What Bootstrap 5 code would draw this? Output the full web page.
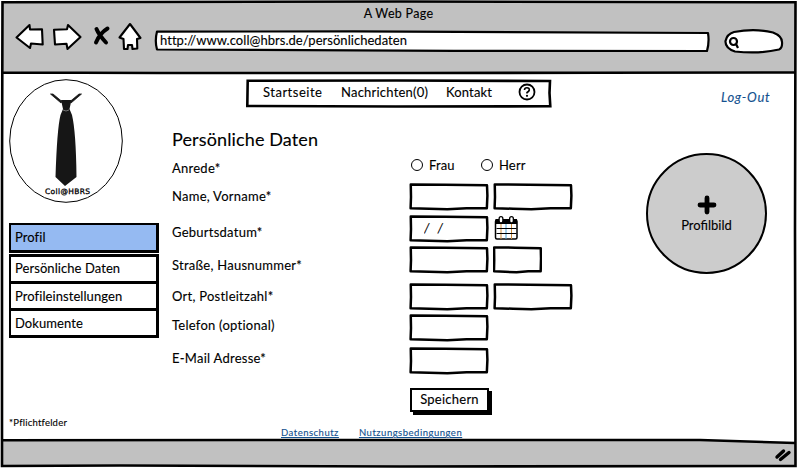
<!DOCTYPE html>
<html lang="de">
<head>
<meta charset="utf-8">
<meta name="viewport" content="width=device-width, initial-scale=1">
<title>A Web Page</title>
<link href="https://cdn.jsdelivr.net/npm/bootstrap@5.3.0/dist/css/bootstrap.min.css" rel="stylesheet">
<style>
body{margin:0;background:#fff;color:#000;font:13px/16px Lato,"Open Sans",sans-serif;letter-spacing:.15px;overflow:hidden;-webkit-text-stroke:.12px}
.window{width:797px;height:468px;background:url("data:image/svg+xml,%3Csvg xmlns='http://www.w3.org/2000/svg' viewBox='0 0 797 468'%3E%3Cpath fill='%23c1c1c1' d='M3 2H795V73H3zM3 440L700 440 795 443V466H3z'/%3E%3Cpath fill='none' stroke='%23000' stroke-width='2.6' d='M2.5 2.3L400 1.5 795.5 2.3 795 230 795.5 466 400 466.5 120 465.5 2 466 2 180zM2 72.5L160 73 420 73 600 72.7 795 72.5M2 440.2L400 440 700 440 795 443'/%3E%3C/svg%3E")}
.toolbar{height:74px}
.page-title{height:28px;padding-top:6px;font-size:12.5px;letter-spacing:.3px}
.tools{height:46px}
.icons{overflow:visible}
.sketch{background:url("data:image/svg+xml,%3Csvg xmlns='http://www.w3.org/2000/svg' viewBox='0 0 100 100' preserveAspectRatio='none'%3E%3Cpath vector-effect='non-scaling-stroke' fill='%23fff' stroke='%23000' stroke-width='2.5' stroke-linejoin='round' d='M2.2 5L45 6 97.500 8 98 45 97.3 90 72 90 48 94 25 92 2 90 2.5 50z'/%3E%3C/svg%3E") 0 0/100% 100% no-repeat;border:0;border-radius:0}
.address{background:url("data:image/svg+xml,%3Csvg xmlns='http://www.w3.org/2000/svg' viewBox='0 0 556 22' preserveAspectRatio='none'%3E%3Cpath fill='%23fff' stroke='%23000' stroke-width='2.2' stroke-linejoin='round' d='M3 1.6L200 1.4 554 3Q555.500 12 553 21L300 20.800 3 19.500Q.6 11 3 1.600z'/%3E%3C/svg%3E") 0 0/100% 100% no-repeat;width:556px;height:22px;margin-top:2px;padding:2px 6px;letter-spacing:.04px}
.search{margin:1px 0 0 14px}
.logo-box{width:114px;height:124px;margin-top:5px}
.side{width:163px;margin-left:9px}
.menu{width:150px;margin-top:20px}
.menu a{color:#000;text-decoration:none;padding:0 0 1px 4px;letter-spacing:.07px;display:flex;align-items:center;height:27px;border:solid #000;border-width:0 3px 3px 2px}
.menu a.current{height:30px;border-width:2px 3px 3px 2px;background:#95baf2;margin-bottom:1px}
.menu a.first{height:30px;border-top-width:3px;padding-bottom:2px}
.center{width:468px}
.topnav{width:306px;height:29px;margin:5px 0 0 74px;padding:0 0 3px 17px;background:url("data:image/svg+xml,%3Csvg xmlns='http://www.w3.org/2000/svg' viewBox='0 0 306 29'%3E%3Cpath fill='%23fff' stroke='%23000' stroke-width='2.600' d='M1.700 1.800L150 1.500 304 2 303.500 14 304.300 27.300 150 27.500 1.300 27 1.500 14z'/%3E%3C/svg%3E") no-repeat}
.topnav a{color:#000;text-decoration:none}
.n1{width:78px;letter-spacing:.5px}
.n2{width:105px;letter-spacing:.22px}
.n3{width:72px}
.heading{font-size:18px;line-height:24px;letter-spacing:.13px;margin:19px 0 7px}
.lab{width:237px;letter-spacing:.25px}
.field{width:80px;height:28px;padding:0 13px;font-size:13px}
.field-s{width:49px}
.date{color:#000;font-style:italic;word-spacing:1px;padding:0 13px 3px 15px}
.r1{height:25px}.r2{height:32px}.r3{height:31px}.r4{height:37px}.r5{height:31px}.r6{height:33px}.r7{height:41px}
.r1 .lab{padding-top:2px}.r2 .lab,.r5 .lab{padding-top:5px}.r3 .lab{padding-top:9px}.r4 .lab{padding-top:11px}.r6 .lab,.r7 .lab{padding-top:3px}
.choice{width:70px;height:14px;padding-left:2px;gap:6px}
.ring{width:12px;height:12px;border:1.300px solid #000;border-radius:50%}
.save{width:79px;height:24px;margin-left:238px;border:2px solid #000;background:#fff;box-shadow:3px 3px 0 #000;padding:0 0 2px;color:#000;font-size:13px;line-height:18px;letter-spacing:.25px}
.links{margin:14px 0 0 109px;font-size:9.500px;line-height:14px;gap:20px;letter-spacing:.5px}
.links a,.logout{color:#13518f}
.note{font-size:9.500px;margin-top:77px;letter-spacing:.22px}
.right{width:157px;margin-left:-1px}
.logout{font-size:13px;font-style:italic;text-decoration:none;margin:15px 0 0 82px;letter-spacing:.7px}
.avatar{width:121px;height:121px;margin:48px 0 0 7px;border:2.500px solid #000;border-radius:50%;background:#ccc;padding-top:40px;letter-spacing:0}
.avatar span{margin-top:2px}
</style>
<script src="https://cdn.jsdelivr.net/npm/bootstrap@5.3.0/dist/js/bootstrap.bundle.min.js"></script>
</head>
<body>
<div class="window d-flex flex-column">
  <header class="toolbar d-flex flex-column">
    <div class="page-title text-center">A Web Page</div>
    <div class="tools d-flex align-items-start">
      <svg class="icons" width="154" height="46" viewBox="0 28 154 46" fill="#fff" stroke="#000" stroke-width="2.100" stroke-linejoin="round" stroke-linecap="round">
        <path d="M16.500 37.500L29.500 25 30 29.500 42 29.300 42.700 44.500 31 43.500 30 48z"/>
        <path d="M54 29.700L67 29.300 68 25 80.500 37 67.500 49 66.500 43.800 55 44.500z"/>
        <path d="M119.500 37.500L130 24 140.500 38 137 39 137.300 48.500 132.500 49 132 45 128 45 127.500 49 124 49 123.500 39z"/>
        <path d="M96.500 29Q99 35 106 42.500M107.500 28.500Q100 33 96 42.500" fill="none" stroke-width="4"/>
      </svg>
      <div class="address">http://www.coll@hbrs.de/persönlichedaten</div>
      <svg class="search" width="61" height="27" viewBox="0 0 61 27" fill="#fff" stroke="#000" stroke-width="2.200"><path d="M10 3Q31 -1 49 3.500 58 7 58 13 58.500 19 55 20.500 36 25 11 22.500 1 19 1.500 12 3 5 10 3z"/><circle cx="9.500" cy="12.500" r="3.500"/><path d="M12 15L14 19"/></svg>
    </div>
  </header>

  <main class="d-flex flex-grow-1">
    <aside class="side">
      <svg class="logo-box d-block" viewBox="0 0 114 124">
        <ellipse cx="57" cy="62" rx="56.300" ry="61.300" fill="none" stroke="#000" stroke-width="1"/>
        <path d="M41.500 15H44L53 22.500 52 24zM72.500 15H70L61 22.500 62 24z" fill="#161616" stroke="#161616" stroke-width=".8"/>
        <path fill="#161616" d="M52 21H62.500L60.500 30 63 36Q67 53 67.500 98L56 107 46.500 98Q48 50 51.500 36L54 30z"/>
        <path d="M54 31Q57 33 60 31" stroke="#999" fill="none" stroke-width=".7"/>
        <text x="36" y="115" font-family="DejaVu Sans, sans-serif" font-size="7.500" stroke="#000" stroke-width=".3" textLength="45" letter-spacing="0">Coll@HBRS</text>
      </svg>
      <nav class="menu">
        <a class="current" href="#">Profil</a>
        <a class="first" href="#">Persönliche Daten</a>
        <a href="#">Profileinstellungen</a>
        <a href="#">Dokumente</a>
      </nav>
      <div class="note">*Pflichtfelder</div>
    </aside>

    <section class="center">
      <nav class="topnav d-flex align-items-center">
        <a href="#" class="n1">Startseite</a><a href="#" class="n2">Nachrichten(0)</a><a href="#" class="n3">Kontakt</a>
        <svg width="18" height="18" viewBox="0 0 18 18"><circle cx="9" cy="9" r="7.500" fill="none" stroke="#000" stroke-width="1.800"/><path d="M6.500 7Q6.500 4.800 9 4.800 11.500 4.800 11.300 7 11 8.500 9 9.500V10.500" fill="none" stroke="#000" stroke-width="1.600"/><circle cx="9" cy="12.800" r="1.100"/></svg>
      </nav>
      <h1 class="heading fw-normal">Persönliche Daten</h1>
      <form>
        <div class="d-flex r1"><div class="lab">Anrede*</div>
          <div class="choice d-flex align-items-center"><span class="ring"></span>Frau</div>
          <div class="choice d-flex align-items-center"><span class="ring"></span>Herr</div></div>
        <div class="d-flex r2"><label class="lab">Name, Vorname*</label><input class="field sketch me-1"><input class="field sketch"></div>
        <div class="d-flex r3"><label class="lab">Geburtsdatum*</label><input class="field sketch date me-1" value="/  /">
          <svg width="26" height="26" viewBox="-1.500 0 26 26"><rect x="1" y="5" width="21.500" height="19" rx="1.500" fill="#fff" stroke="#000" stroke-width="1.500"/><path d="M1 4H22.500V9H1z"/><path d="M11.500 9V24" stroke="#4aa0d0"/><path d="M6.500 9V24M17 9V24" stroke="#c98a3a"/><path d="M2 13.500H22M2 18.500H22" stroke="#000"/><path d="M6.500 3.500V6M17 3.500V6" stroke="#000" stroke-width="5" stroke-linecap="round"/><path d="M6.500 3.500V6M17 3.500V6" stroke="#fff" stroke-width="2.400" stroke-linecap="round"/></svg></div>
        <div class="d-flex r4"><label class="lab">Straße, Hausnummer*</label><input class="field sketch me-1"><input class="field field-s sketch"></div>
        <div class="d-flex r5"><label class="lab">Ort, Postleitzahl*</label><input class="field sketch me-1"><input class="field sketch"></div>
        <div class="d-flex r6"><label class="lab">Telefon (optional)</label><input class="field sketch"></div>
        <div class="d-flex r7"><label class="lab">E-Mail Adresse*</label><input class="field sketch"></div>
        <button type="button" class="save d-block">Speichern</button>
      </form>
      <div class="links d-flex"><a href="#">Datenschutz</a><a href="#">Nutzungsbedingungen</a></div>
    </section>

    <aside class="right">
      <a class="logout d-block" href="#">Log-Out</a>
      <div class="avatar d-flex flex-column align-items-center">
        <svg width="20" height="20" viewBox="0 0 20 20"><path d="M10 3V17M3 10H17" stroke="#000" stroke-width="4.800" stroke-linecap="round"/></svg>
        <span>Profilbild</span>
      </div>
    </aside>
  </main>
  <footer>
    <svg class="d-block ms-auto" width="26" height="27" viewBox="0 0 26 27" stroke="#000" stroke-width="3.400" stroke-linecap="round"><path d="M6 16L12.500 10M9.500 18.500L18 11.500"/></svg>
  </footer>
</div>
</body>
</html>
